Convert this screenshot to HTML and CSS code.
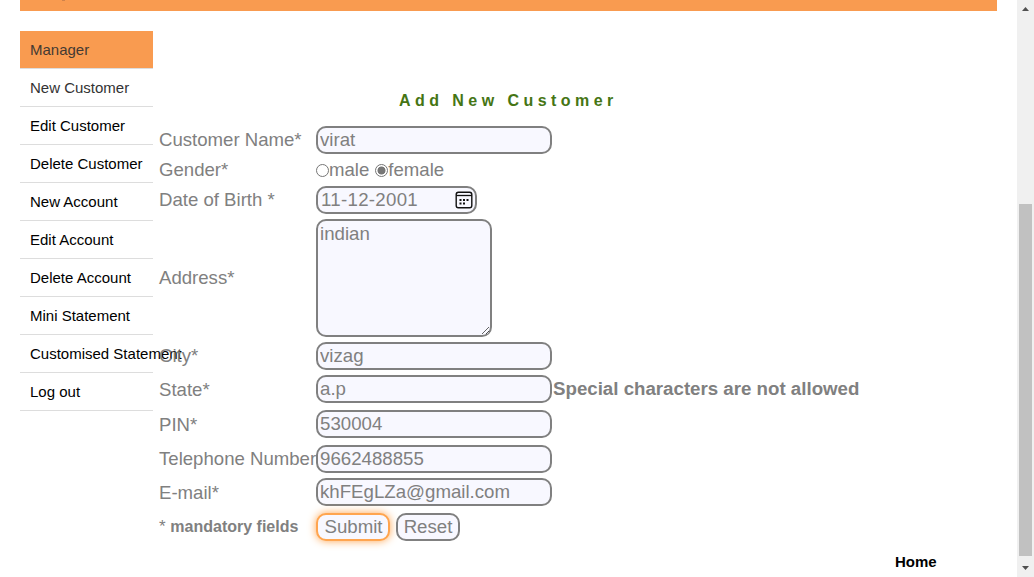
FILE: index.html
```html
<!DOCTYPE html>
<html lang="en">
<head>
<meta charset="utf-8">
<title>Add New Customer</title>
<link rel="stylesheet" href="styles.css">
</head>
<body>
<div class="page">
  <div class="banner"><span class="banner-mark"></span></div>
  <div class="columns">
    <ul class="menu">
      <li class="active"><a>Manager</a></li>
      <li class="visited"><a>New Customer</a></li>
      <li><a>Edit Customer</a></li>
      <li><a>Delete Customer</a></li>
      <li><a>New Account</a></li>
      <li><a>Edit Account</a></li>
      <li><a>Delete Account</a></li>
      <li><a>Mini Statement</a></li>
      <li><a>Customised Statement</a></li>
      <li><a>Log out</a></li>
    </ul>
    <form class="form">
      <h1 class="heading">Add New Customer</h1>
      <div class="row"><label>Customer Name*</label><input class="field" type="text" value="virat"></div>
      <div class="row gender"><label>Gender*</label><span class="radio"></span><span class="option">male</span><span class="radio on"></span><span>female</span></div>
      <div class="row"><label>Date of Birth *</label>
        <div class="field date"><span>11-12-2001</span>
          <svg class="calendar" width="18" height="18" viewBox="0 0 18 18"><rect x="1.2" y="1.2" width="15.6" height="15.6" rx="2.2" fill="none" stroke="#111" stroke-width="1.4"/><path d="M1 4.5H17" stroke="#111" stroke-width="1.3"/><path d="M4.500 9h2M8 9h2M11.500 9h2M4.500 12.500h2M8 12.500h2" stroke="#111" stroke-width="2"/></svg>
        </div>
      </div>
      <div class="row tall gap-s"><label>Address*</label><textarea class="field area">indian</textarea></div>
      <div class="row gap-s"><label>City*</label><input class="field" type="text" value="vizag"></div>
      <div class="row gap-s"><label class="low">State*</label><input class="field" type="text" value="a.p"><strong class="error">Special characters are not allowed</strong></div>
      <div class="row gap-l"><label class="low">PIN*</label><input class="field" type="text" value="530004"></div>
      <div class="row gap-l"><label>Telephone Number</label><input class="field" type="text" value="9662488855"></div>
      <div class="row gap-s"><label class="low">E-mail*</label><input class="field" type="text" value="khFEgLZa@gmail.com"></div>
      <div class="row gap-l"><label class="note">* <b>mandatory fields</b></label><button class="field btn submit" type="button">Submit</button><button class="field btn reset" type="button">Reset</button></div>
      <a class="home">Home</a>
    </form>
  </div>
</div>
<div class="scrollbar">
  <svg class="arrow" width="17" height="17" viewBox="0 0 17 17"><path d="M5 11h7L8.5 7z" fill="#505050"/></svg>
  <div class="thumb"></div>
  <svg class="arrow" width="17" height="17" viewBox="0 0 17 17"><path d="M5 6h7L8.500 10z" fill="#505050"/></svg>
</div>
</body>
</html>
```
FILE: styles.css
```css
* { box-sizing: border-box; }
body {
  margin: 0;
  height: 577px;
  display: flex;
  overflow: hidden;
  background: #fff;
  font-family: "Liberation Sans", Arial, sans-serif;
}
.page { flex: 1; padding: 0 20px; height: 577px; }
.banner { height: 11px; background: #f99b50; padding-left: 42px; }
.banner-mark { display: block; width: 3px; height: 1px; background: #d0824a; }
.columns { display: flex; padding-top: 20px; }
.menu {
  list-style: none;
  margin: 0;
  padding: 0;
  width: 133px;
  flex: none;
  font-size: 15px;
  color: #000;
}
.menu li {
  height: 38px;
  padding-left: 10px;
  line-height: 37px;
  border-bottom: 1px solid #ddd;
  white-space: nowrap;
}
.menu .active { background: #f99b50; color: #443a33; }
.menu .visited { color: #333; }
.form {
  flex: 1;
  padding: 60px 0 0 6px;
  color: gray;
  font-size: 18.6px;
  display: flex;
  flex-direction: column;
}
.heading {
  margin: 0 0 15px 240px;
  height: 20px;
  font-size: 16px;
  line-height: 20px;
  letter-spacing: 4.45px;
  color: #457514;
}
.row { display: flex; align-items: center; height: 28px; white-space: nowrap; }
.row label { width: 157px; flex: none; }
.row .low { padding-top: 2px; }
.gap-s { margin-top: 5px; }
.gap-l { margin-top: 7px; }
.tall { height: 118px; }
.gender { height: 32px; }
.field {
  width: 236px;
  height: 28px;
  margin: 0;
  padding: 0 2px 1px;
  border: 2px solid gray;
  border-radius: 10px;
  background: #f8f8ff;
  color: gray;
  font: 18.67px "Liberation Sans", Arial, sans-serif;
  outline: none;
}
.date { width: 161px; display: flex; align-items: center; justify-content: space-between; padding: 0 2px 0 3px; letter-spacing: 0.3px; }
.area { width: 176px; height: 118px; padding: 2px; }
.radio {
  width: 13px;
  height: 13px;
  border: 1px solid #767676;
  border-radius: 50%;
  background: #fff;
}
.radio.on { background: radial-gradient(circle, #767676 0 3.6px, #fff 4.4px); }
.option { margin-right: 6px; }
.error { font-size: 18.7px; padding-left: 1px; }
.note { font-size: 17px; }
.note b { font-size: 16px; }
.btn { padding: 0; }
.submit { width: 74px; padding-left: 1px; border-color: #ffa54f; box-shadow: 0 0 8px #ffa54f; }
.reset { width: 64px; margin-left: 6px; }
.home { margin: 11px 0 0 736px; font-size: 15px; line-height: 20px; font-weight: bold; color: #000; }
.scrollbar { width: 17px; height: 577px; background: #f0f0f0; display: flex; flex-direction: column; align-items: center; }
.arrow { flex: none; }
.thumb { width: 13px; height: 352px; margin: 187px 0 4px; background: #c1c1c1; }
```
